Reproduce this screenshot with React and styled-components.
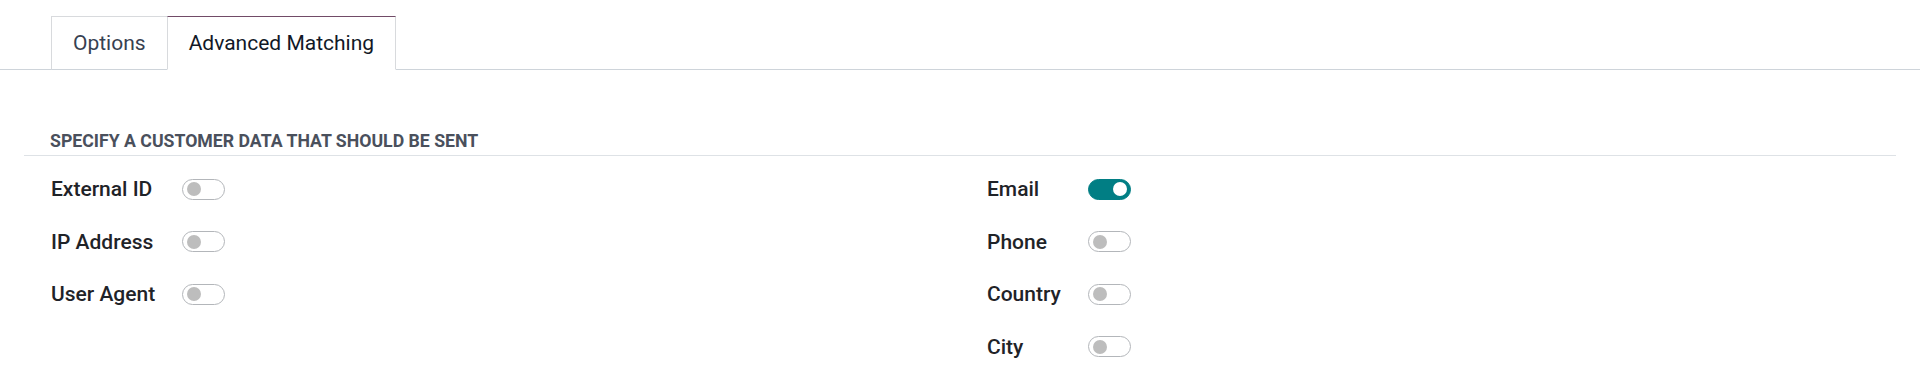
import styled, { createGlobalStyle } from "styled-components";
import { useState } from "react";

const GlobalStyle = createGlobalStyle`
  body {
    margin: 0;
    background: #ffffff;
    font-family: Roboto, "Noto Sans", sans-serif;
  }
`;

const Page = styled.div`
  width: 1920px;
  height: 382px;
  background: #ffffff;
`;

const TabBar = styled.nav`
  display: flex;
  padding: 16px 0 0 51px;
  border-bottom: 1px solid #ced4da;
`;

const Tab = styled.button`
  height: 54px;
  padding: 0 21px;
  margin-bottom: -1px;
  margin-right: -1px;
  font-family: inherit;
  font-size: 21px;
  color: ${(p) => (p.active ? "#111827" : "#374151")};
  background: #ffffff;
  border: 1px solid #d8dadd;
  border-top-color: ${(p) => (p.active ? "#714b67" : "#d8dadd")};
  border-bottom-color: ${(p) => (p.active ? "#ffffff" : "#ced4da")};
  cursor: pointer;
`;

const Sheet = styled.section`
  padding: 61px 24px 0;
`;

const Heading = styled.h3`
  margin: 0;
  padding: 0 0 4px 26px;
  font-size: 17.7px;
  font-weight: 700;
  color: #4a505c;
  text-transform: uppercase;
  border-bottom: 1px solid #dee2e6;
`;

const Columns = styled.div`
  display: grid;
  grid-template-columns: 1fr 1fr;
  padding-top: 7px;
`;

const Fields = styled.div`
  display: grid;
  grid-template-columns: max-content 1fr;
  grid-auto-rows: 52.5px;
  column-gap: 27px;
  align-items: center;
  padding-left: 27px;
`;

const Label = styled.label`
  font-size: 21px;
  font-weight: 500;
  color: #1f2328;
`;

const Track = styled.span`
  position: relative;
  display: block;
  width: 41px;
  height: 19px;
  border-radius: 11px;
  border: 1px solid ${(p) => (p.on ? "#017e84" : "#b3b6ba")};
  background: ${(p) => (p.on ? "#017e84" : "#ffffff")};
  cursor: pointer;

  &::after {
    content: "";
    position: absolute;
    top: 2.5px;
    left: ${(p) => (p.on ? "24px" : "4px")};
    width: 14px;
    height: 14px;
    border-radius: 50%;
    background: ${(p) => (p.on ? "#ffffff" : "#bdbdbd")};
  }
`;

const Toggle = ({ on, onClick }) => <Track on={on ? 1 : 0} onClick={onClick} />;

const left = ["External ID", "IP Address", "User Agent"];
const right = ["Email", "Phone", "Country", "City"];

const FieldList = ({ names, values, flip }) => (
  <Fields>
    {names.map((n) => [
      <Label key={n + "-label"}>{n}</Label>,
      <div key={n + "-toggle"}>
        <Toggle on={values[n]} onClick={() => flip(n)} />
      </div>,
    ])}
  </Fields>
);

export default function App() {
  const [tab, setTab] = useState("advanced");
  const [values, setValues] = useState({ Email: true });
  const flip = (n) => setValues({ ...values, [n]: !values[n] });

  return (
    <Page>
      <GlobalStyle />
      <TabBar>
        <Tab active={tab === "options"} onClick={() => setTab("options")}>
          Options
        </Tab>
        <Tab active={tab === "advanced"} onClick={() => setTab("advanced")}>
          Advanced Matching
        </Tab>
      </TabBar>
      <Sheet>
        <Heading>Specify a customer data that should be sent</Heading>
        <Columns>
          <FieldList names={left} values={values} flip={flip} />
          <FieldList names={right} values={values} flip={flip} />
        </Columns>
      </Sheet>
    </Page>
  );
}
